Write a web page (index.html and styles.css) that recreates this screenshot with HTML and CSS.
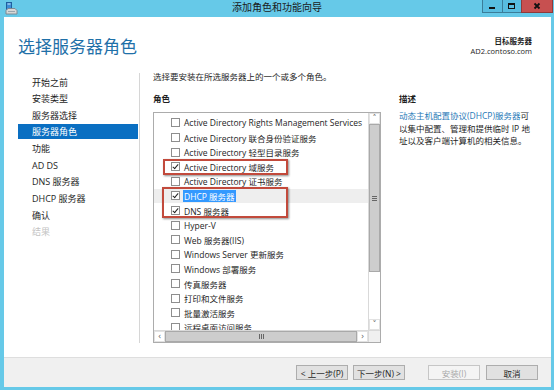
FILE: index.html
```html
<!DOCTYPE html>
<html lang="zh-CN">

<head>
    <meta charset="UTF-8" />
    <title>添加角色和功能向导</title>
    <link rel="stylesheet" href="styles.css">
</head>

<body>

    <div class="window">
        <div class="titlebar">
            <svg class="app-icon" width="13" height="13" viewBox="0 0 13 13">
                <rect x="1.5" y="0.5" width="5" height="7" fill="#3d8ed6" stroke="#1f5f9e" />
                <rect x="2.5" y="1.5" width="3" height="1" fill="#cfe6fa" />
                <path d="M1 8.5 L3 6.5 H10 L12 8.5 V12 H1 Z" fill="#d7d7d7" stroke="#7d8a93" />
                <rect x="3" y="9" width="7" height="1" fill="#9aa5ad" />
            </svg>
            <div class="title">添加角色和功能向导</div>
            <svg class="win-btns" width="71" height="13" viewBox="0 0 71 13">
                <rect x="0.5" y="-1" width="20" height="13.5" fill="#58bde0" stroke="#3b7d99" />
                <rect x="7" y="7" width="6" height="2" fill="#111" />
                <rect x="20.5" y="-1" width="19" height="13.5" fill="#58bde0" stroke="#3b7d99" />
                <rect x="26.5" y="3.5" width="6" height="5" fill="none" stroke="#111" />
                <rect x="26" y="3" width="7" height="2" fill="#111" />
                <rect x="39.5" y="-1" width="31" height="13.5" fill="#c75050" stroke="#8e3a3a" />
                <path d="M52.5 3.5 L57.5 8.5 M57.5 3.5 L52.5 8.5" stroke="#111" stroke-width="1.8" />
            </svg>
        </div>

        <div class="client">
            <div class="header">
                <h1>选择服务器角色</h1>
                <div class="target">
                    <div class="target-label">目标服务器</div>
                    <div>AD2.contoso.com</div>
                </div>
            </div>

            <div class="main">
                <ul class="nav">
                    <li>开始之前</li>
                    <li>安装类型</li>
                    <li>服务器选择</li>
                    <li class="active">服务器角色</li>
                    <li>功能</li>
                    <li>AD DS</li>
                    <li>DNS 服务器</li>
                    <li>DHCP 服务器</li>
                    <li>确认</li>
                    <li class="disabled">结果</li>
                </ul>

                <div class="content">
                    <p class="intro">选择要安装在所选服务器上的一个或多个角色。</p>
                    <div class="section-label">角色</div>

                    <div class="listbox">
                        <div class="rows">
                            <div class="row"><span class="cb"></span>Active Directory Rights Management Services</div>
                            <div class="row"><span class="cb"></span>Active Directory 联合身份验证服务</div>
                            <div class="row"><span class="cb"></span>Active Directory 轻型目录服务</div>
                            <div class="row"><span class="cb checked"></span>Active Directory 域服务</div>
                            <div class="row"><span class="cb"></span>Active Directory 证书服务</div>
                            <div class="row selected"><span class="cb checked"></span><span class="hl">DHCP 服务器</span></div>
                            <div class="row"><span class="cb checked"></span>DNS 服务器</div>
                            <div class="row"><span class="cb"></span>Hyper-V</div>
                            <div class="row"><span class="cb"></span>Web 服务器(IIS)</div>
                            <div class="row"><span class="cb"></span>Windows Server 更新服务</div>
                            <div class="row"><span class="cb"></span>Windows 部署服务</div>
                            <div class="row"><span class="cb"></span>传真服务器</div>
                            <div class="row"><span class="cb"></span>打印和文件服务</div>
                            <div class="row"><span class="cb"></span>批量激活服务</div>
                            <div class="row"><span class="cb"></span>远程桌面访问服务</div>
                        </div>

                        <div class="vscroll">
                            <span class="sb-btn">&#708;</span>
                            <div class="sb-track">
                                <div class="sb-thumb v-thumb"><i></i></div>
                            </div>
                            <span class="sb-btn">&#709;</span>
                        </div>
                        <div class="hscroll">
                            <span class="sb-btn">&lsaquo;</span>
                            <div class="sb-track">
                                <div class="sb-thumb h-thumb"><i></i></div>
                            </div>
                            <span class="sb-btn">&rsaquo;</span>
                        </div>
                        <div class="corner"></div>

                        <div class="mark mark-ad"></div>
                        <div class="mark mark-dns"></div>
                    </div>
                </div>

                <div class="desc">
                    <div class="section-label">描述</div>
                    <p class="desc-text"><span class="link">动态主机配置协议(DHCP)服务器</span>可以集中配置、管理和提供临时 IP 地址以及客户端计算机的相关信息。</p>
                </div>
            </div>

            <div class="footer">
                <button>&lt; 上一步(P)</button>
                <button>下一步(N) &gt;</button>
                <button class="install" disabled>安装(I)</button>
                <button>取消</button>
            </div>
        </div>
    </div>

</body>

</html>
```

FILE: styles.css
```css
* {
    box-sizing: border-box;
}

body {
    margin: 0;
    font-family: "Open Sans", "Noto Sans CJK SC", sans-serif;
    font-size: 8.5px;
    color: #1e1e1e;
}

.window {
    width: 554px;
    height: 390px;
    background: #66c9e8;
    display: flex;
    flex-direction: column;
}

/* title bar */

.titlebar {
    height: 17px;
    flex: none;
    display: flex;
    align-items: flex-start;
}

.app-icon {
    flex: none;
    display: block;
    margin: 2px 0 0 5px;
}

.title {
    flex: 1;
    padding-left: 54px;
    text-align: center;
    font-size: 10px;
    line-height: 15px;
    color: #1a1a1a;
}

.win-btns {
    flex: none;
    display: block;
    margin-right: 1px;
}

/* client area */

.client {
    flex: 1;
    margin: 0 3px 3px 4px;
    background: #fff;
    display: flex;
    flex-direction: column;
}

.header {
    height: 53px;
    display: flex;
    justify-content: space-between;
    padding: 19px 19px 0 14px;
}

h1 {
    margin: 0;
    font-weight: normal;
    font-size: 17px;
    line-height: 22px;
    color: #1f70a8;
}

.target {
    text-align: right;
    font-size: 7.5px;
    line-height: 10px;
}

.target-label {
    font-weight: bold;
}

.main {
    flex: 1;
    display: flex;
}

.nav {
    list-style: none;
    margin: 3px 0 0 14px;
    padding: 1.5px 0 0;
    width: 122px;
    height: 270px;
    border-right: 1px solid #d6d6d6;
    font-size: 9px;
}

.nav li {
    line-height: 15px;
    margin-bottom: 1.67px;
    padding-left: 14px;
    margin-right: 1px;
}

.nav li.active {
    background: #0a6fc2;
    color: #fff;
}

.nav li.disabled {
    color: #c4c4c4;
}

.content {
    margin-left: 13px;
    width: 228px;
}

.intro {
    margin: 0;
    padding-top: 1px;
    line-height: 12px;
}

.section-label {
    margin-top: 10px;
    line-height: 12px;
    font-weight: bold;
}

/* role list */

.listbox {
    position: relative;
    margin-top: 7px;
    height: 231px;
    border: 1px solid #acacac;
    display: grid;
    grid-template-columns: 1fr 12px;
    grid-template-rows: 1fr 12px;
}

.rows {
    overflow: hidden;
    padding-top: 2.7px;
}

.row {
    height: 14.6px;
    display: flex;
    align-items: center;
    padding-left: 17px;
    white-space: nowrap;
}

.row.selected {
    background: #eeeeee;
}

.cb {
    flex: none;
    width: 9px;
    height: 9px;
    margin-right: 4px;
    border: 1px solid #8e8e8e;
    background: #fff;
    position: relative;
}

.cb.checked::after {
    content: "";
    position: absolute;
    left: 2px;
    top: 0;
    width: 2px;
    height: 5px;
    border: solid #222;
    border-width: 0 1.5px 1.5px 0;
    transform: rotate(40deg);
}

.hl {
    background: #3399ff;
    color: #fff;
    padding: 0 1px;
    margin-left: -1px;
}

.vscroll,
.hscroll {
    display: flex;
    background: #fff;
}

.vscroll {
    flex-direction: column;
    border-left: 1px solid #d9d9d9;
}

.hscroll {
    border-top: 1px solid #d9d9d9;
}

.sb-btn {
    flex: none;
    width: 11px;
    height: 11px;
    display: flex;
    align-items: center;
    justify-content: center;
    font-family: "DejaVu Sans", sans-serif;
    font-size: 8px;
    color: #606060;
    border: 1px solid #e2e2e2;
}

.sb-track {
    flex: 1;
    display: flex;
}

.vscroll .sb-track {
    flex-direction: column;
}

.sb-thumb {
    background: #cdcdcd;
    border: 1px solid #a9a9a9;
    display: flex;
    align-items: center;
    justify-content: center;
}

.v-thumb {
    height: 148px;
}

.h-thumb {
    flex: 1;
}

.sb-thumb i {
    width: 5px;
    height: 5px;
    border-top: 1px solid #666;
    border-bottom: 1px solid #666;
    background: linear-gradient(#666, #666) center / 100% 1px no-repeat;
}

.h-thumb i {
    width: 5px;
    height: 5px;
    border: solid #666;
    border-width: 0 1px;
    background: linear-gradient(#666, #666) center / 1px 100% no-repeat;
}

.corner {
    background: #f0f0f0;
    border-left: 1px solid #d9d9d9;
    border-top: 1px solid #d9d9d9;
}

/* annotation boxes drawn over the list */

.mark {
    position: absolute;
    border: 2px solid #c24a3c;
    box-shadow: 1px 1px 2px rgba(0, 0, 0, 0.45);
}

.mark-ad {
    left: 9px;
    top: 46px;
    width: 125px;
    height: 16px;
}

.mark-dns {
    left: 8px;
    top: 74px;
    width: 126px;
    height: 31px;
}

/* description */

.desc {
    margin-left: 18px;
    width: 138px;
    padding-top: 13px;
}

.desc-text {
    margin: 5px 0 0;
    line-height: 12.5px;
}

.link {
    color: #1f7ab8;
}

/* footer */

.footer {
    height: 30px;
    border-top: 1px solid #dedede;
    background: #f0f0f0;
    display: flex;
    align-items: flex-start;
    justify-content: flex-end;
    padding: 7px 13px 0 0;
}

.footer button {
    width: 52px;
    height: 15px;
    padding: 0;
    margin-left: 5px;
    font-family: inherit;
    font-size: 8.5px;
    color: #1e1e1e;
    background: #e1e1e1;
    border: 1px solid #adadad;
}

.footer .install {
    margin-left: 23px;
    margin-right: 1px;
    background: #f4f4f4;
    border-color: #c6c6c6;
    color: #a8a8a8;
}
```
